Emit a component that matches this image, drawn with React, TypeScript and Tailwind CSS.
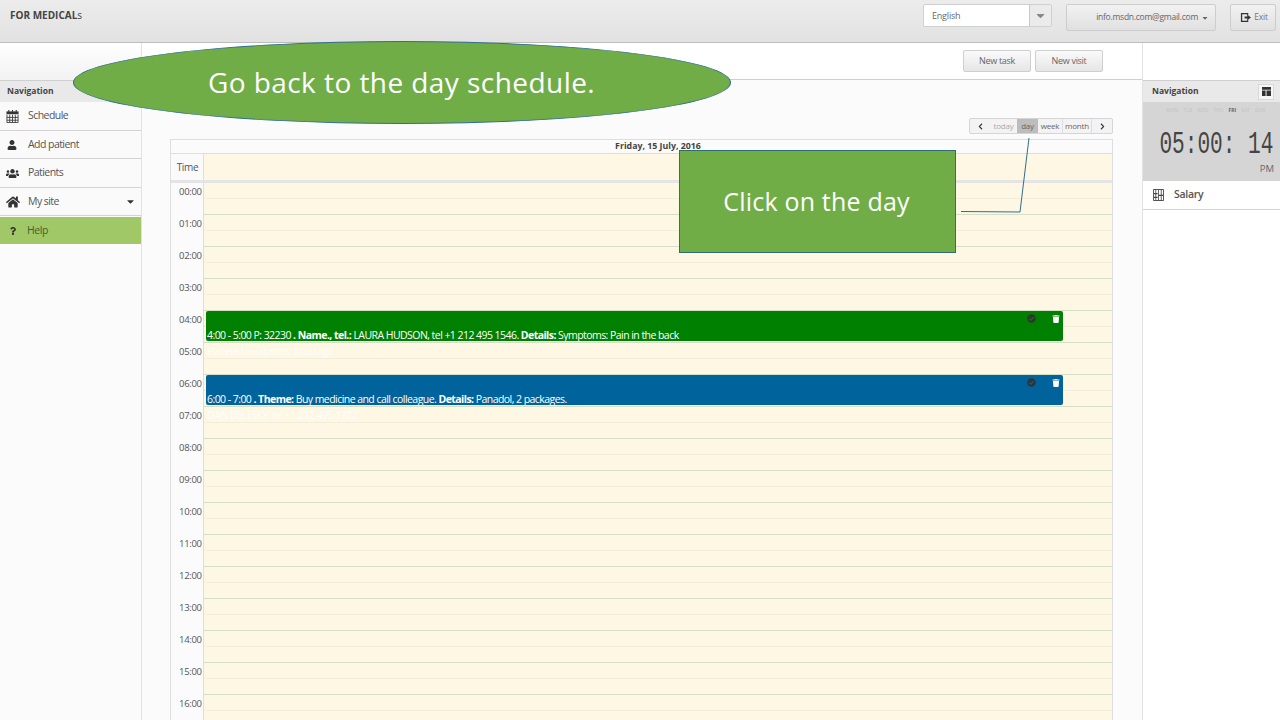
import { FaCaretDown, FaCheckCircle, FaChevronLeft, FaChevronRight, FaHome, FaQuestion, FaTrash, FaUser, FaUsers } from "react-icons/fa";

const hours = ["00:00", "01:00", "02:00", "03:00", "04:00", "05:00", "06:00", "07:00", "08:00", "09:00", "10:00", "11:00", "12:00", "13:00", "14:00", "15:00", "16:00"];

function CalendarIcon() {
  return (
    <svg viewBox="0 0 14 14" className="h-[13px] w-[13px]" fill="none">
      <path d="M0.5 1.5h13v3h-13z" fill="#333" />
      <path d="M3 0v2M7 0v2M11 0v2" stroke="#333" strokeWidth="1.2" />
      <path d="M1 5v8.5h12V5M1 8h12M1 11h12M4 5v8.5M7 5v8.5M10 5v8.5" stroke="#333" strokeWidth="0.9" />
    </svg>
  );
}

function SalaryIcon() {
  return (
    <svg viewBox="0 0 12 13" className="h-[12px] w-[11px]" fill="none">
      <path d="M0.5 0.5h11v12h-11z" stroke="#444" strokeWidth="1" />
      <path d="M3 1v11M6 1v11M9 1v11" stroke="#444" strokeWidth="0.9" />
      <path d="M1 5h4M6 7h5M1 9h4" stroke="#444" strokeWidth="1.4" />
    </svg>
  );
}

const navItems = [
  { label: "Schedule", icon: <CalendarIcon /> },
  { label: "Add patient", icon: <FaUser className="ml-[1px] text-[10px] text-[#333]" /> },
  { label: "Patients", icon: <FaUsers className="text-[13px] text-[#333]" /> },
  { label: "My site", icon: <FaHome className="text-[14px] text-[#333]" />, caret: true },
];

function NavRow({ label, icon, caret }: { label: string; icon: React.ReactNode; caret?: boolean }) {
  return (
    <div className="flex h-[28.5px] items-center border-b border-[#d4d4d4] bg-[#fafafa] pl-[6px] pr-[5px] pt-[1px] text-[10.5px] tracking-[-0.55px] text-[#555]">
      <span className="flex w-[22px] justify-start">{icon}</span>
      <span>{label}</span>
      {caret && <FaCaretDown className="ml-auto text-[11px] text-[#333]" />}
    </div>
  );
}

function CalendarEvent({ color, top, first, second }: { color: string; top: string; first: React.ReactNode; second: string }) {
  return (
    <div className={`absolute left-[35px] h-[30px] w-[857px] rounded-[2px] ${color} ${top}`}>
      <div className="absolute left-[1px] top-[17px] whitespace-nowrap text-[10.5px] leading-[14px] tracking-[-0.55px] text-white">
        {first}
        <div className="mt-[2px] opacity-90">{second}</div>
      </div>
      <FaCheckCircle className="absolute right-[27px] top-[3px] text-[9px] text-[#333]" />
      <FaTrash className="absolute right-[3px] top-[4px] text-[8px] text-white" />
    </div>
  );
}

function ToolButton({ label }: { label: string }) {
  return (
    <div className="flex h-[22px] w-[68px] items-center justify-center rounded-[2px] border border-[#cfcfcf] bg-gradient-to-b from-[#fafafa] to-[#e6e6e6] text-[9px] tracking-[-0.3px] text-[#666]">
      {label}
    </div>
  );
}

export default function App() {
  return (
    <div className="relative flex h-[720px] w-[1280px] flex-col overflow-hidden bg-[#fbfbfb] font-['Open_Sans',sans-serif]">
      <header className="flex h-[43px] shrink-0 items-start border-b border-[#bdbdbd] bg-gradient-to-b from-[#ececec] to-[#e2e2e2] pl-[10px]">
        <span className="mt-[8px] text-[10px] font-bold text-[#444]">
          FOR MEDICAL<span className="font-normal">s</span>
        </span>
        <div className="ml-auto mr-[4px] mt-[4px] flex items-start">
          <div className="flex h-[23px] w-[129px] items-center rounded-[2px] border border-[#d0d0d0] bg-white pl-[8px] text-[9px] tracking-[-0.2px] text-[#666]">
            English
            <span className="ml-auto flex h-full w-[22px] items-center justify-center border-l border-[#c8c8c8] bg-[#ebebeb] text-[13px] text-[#888]">
              <FaCaretDown />
            </span>
          </div>
          <div className="ml-[14px] flex h-[27px] w-[150px] items-center justify-end rounded-[2px] border border-[#cdcdcd] bg-gradient-to-b from-[#f2f2f2] to-[#e0e0e0] pr-[6px] text-[8.5px] tracking-[-0.25px] text-[#666]">
            info.msdn.com@gmail.com
            <FaCaretDown className="ml-[3px] text-[8px]" />
          </div>
          <div className="ml-[14px] flex h-[27px] w-[46px] items-center justify-center gap-[3px] rounded-[2px] border border-[#cdcdcd] bg-gradient-to-b from-[#f2f2f2] to-[#e0e0e0] pl-[2px] text-[8.5px] tracking-[-0.2px] text-[#777]">
            <svg viewBox="0 0 12 12" className="h-[11px] w-[11px] fill-[#333]">
              <path d="M1 1h8v3H7.8V2.4H2.4v7.2h5.4V8H9v3H1zM5 5h3V3l4 3-4 3V7H5z" />
            </svg>
            Exit
          </div>
        </div>
      </header>

      <div className="flex min-h-0 flex-1">
        <aside className="w-[142px] shrink-0 border-r border-[#e2e2e2]">
          <div className="h-[37px] bg-gradient-to-b from-white to-[#f2f2f2]" />
          <div className="flex h-[22px] items-center border-t border-[#cfcfcf] bg-[#e9e9e9] pl-[7px] text-[8.5px] font-bold text-[#444]">Navigation</div>
          {navItems.map((item) => (
            <NavRow key={item.label} {...item} />
          ))}
          <div className="mt-[1px] flex h-[27px] items-center bg-[#a0c866] pl-[10px] text-[10.5px] tracking-[-0.4px] text-[#4b5b33]">
            <FaQuestion className="mr-[11px] w-[6px] text-[8px] text-[#333]" />
            Help
          </div>
        </aside>

        <main className="flex min-w-0 flex-1 flex-col">
          <div className="flex h-[37px] shrink-0 items-center justify-end gap-[4px] border-b border-[#cfcfcf] bg-white pr-[39px]">
            <ToolButton label="New task" />
            <ToolButton label="New visit" />
          </div>

          <div className="flex flex-1 flex-col pl-[28px] pr-[29px]">
            <div className="mt-[38px] flex h-[16px] shrink-0 items-stretch justify-end text-[8px] tracking-[-0.2px] text-[#666]">
              <div className="flex overflow-hidden rounded-[2px] border border-[#d5d5d5] bg-[#f3f3f3]">
                <span className="flex w-[20px] items-center justify-center text-[7px] text-[#333]"><FaChevronLeft /></span>
                <span className="flex w-[27px] items-center justify-center text-[#aaa]">today</span>
                <span className="flex w-[21px] items-center justify-center bg-[#bdbdbd]">day</span>
                <span className="flex w-[25px] items-center justify-center border-r border-[#ddd]">week</span>
                <span className="flex w-[29px] items-center justify-center border-r border-[#ddd]">month</span>
                <span className="flex w-[20px] items-center justify-center text-[7px] text-[#333]"><FaChevronRight /></span>
              </div>
            </div>

            <div className="mt-[5px] min-h-0 flex-1 overflow-hidden border-x border-t border-[#dedede]">
              <div className="flex h-[14px] items-center justify-center border-b border-[#dedede] bg-[#fbfbfb] pl-[33px] text-[8.8px] font-bold leading-none text-[#444]">
                Friday, 15 July, 2016
              </div>
              <div className="flex h-[29px] border-b-[3px] border-[#e4e4e4]">
                <div className="flex w-[33px] shrink-0 items-center justify-center border-r border-[#dedede] bg-[#fafafa] pl-[1px] text-[10px] tracking-[-0.3px] text-[#555]">Time</div>
                <div className="flex-1 bg-[#fef7e4]" />
              </div>
              <div className="relative">
                {hours.map((hour) => (
                  <div key={hour} className="flex h-[32px]">
                    <div className="w-[33px] shrink-0 border-r border-[#dedede] pl-[8px] pt-[2px] text-[9.5px] leading-[14px] tracking-[-0.3px] text-[#555]">{hour}</div>
                    <div className="flex-1 border-b border-[#d3dfc6] bg-[#fef7e4]">
                      <div className="h-[16px] border-b border-[#efeeda]" />
                    </div>
                  </div>
                ))}
                <CalendarEvent
                  color="bg-[#008000]"
                  top="top-[128px]"
                  first={<>4:00 - 5:00 P: 32230 <b>. Name., tel.:</b> LAURA HUDSON, tel +1 212 495 1546. <b>Details:</b> Symptoms: Pain in the back</>}
                  second="Planned treatment: massage"
                />
                <CalendarEvent
                  color="bg-[#00639c]"
                  top="top-[192px]"
                  first={<>6:00 - 7:00 <b>. Theme:</b> Buy medicine and call colleague. <b>Details:</b> Panadol, 2 packages.</>}
                  second="DAN BELTSKY, tel +1 212 495 1782"
                />
              </div>
            </div>
          </div>
        </main>

        <aside className="w-[138px] shrink-0 border-l border-[#e2e2e2] bg-white">
          <div className="h-[37px]" />
          <div className="flex h-[22px] items-center border-t border-[#cfcfcf] bg-[#e9e9e9] pl-[9px] pr-[6px] text-[8.5px] font-bold text-[#444]">
            Navigation
            <span className="ml-auto flex h-[16px] w-[16px] items-center justify-center border border-[#d8d8d8] bg-[#f6f6f6]">
              <svg viewBox="0 0 10 10" className="h-[9px] w-[9px] fill-[#333]">
                <path d="M0 0h10v3H0zM0 4h4v6H0zM5 4h5v6H5z" />
              </svg>
            </span>
          </div>
          <div className="flex h-[79px] flex-col bg-[#d5d5d5]">
            <div className="mt-[5px] flex justify-center gap-[5px] pl-[8px] text-[5px] text-[#c4c4c4]">
              <span>MON</span><span>TUE</span><span>WED</span><span>THU</span><span className="font-bold text-[#666]">FRI</span><span>SAT</span><span>SUN</span>
            </div>
            <div className="mt-[13px] flex justify-center pl-[10px]">
              <span className="scale-x-[0.66] whitespace-pre font-['Liberation_Mono',monospace] text-[32px] leading-[34px] text-[#444]">05:00: 14</span>
            </div>
            <div className="pr-[6px] text-right text-[9.5px] text-[#666]">PM</div>
          </div>
          <div className="flex h-[29px] items-center border-b border-[#d4d4d4] bg-white pl-[10px] text-[10.5px] font-semibold tracking-[-0.3px] text-[#555]">
            <span className="mr-[10px]"><SalaryIcon /></span>
            Salary
          </div>
        </aside>
      </div>

      {/* slide callouts on top of the screenshot */}
      <div className="absolute left-[73px] top-[41px] flex h-[83px] w-[658px] items-center justify-center rounded-[50%] border border-[#2f6f8f] bg-[#70ad47] pb-[2px] pr-[1px] text-[28px] tracking-[0.44px] text-white">
        Go back to the day schedule.
      </div>
      <div className="absolute left-[679px] top-[150px] flex h-[103px] w-[277px] items-center justify-center border border-[#2f6f6f] bg-[#70ad47] pr-[2px] text-[25px] tracking-[0.2px] text-white">
        Click on the day
      </div>
      <svg className="absolute left-[960px] top-[136px] h-[80px] w-[72px]" viewBox="0 0 72 80" fill="none">
        <path d="M1 75.5 L60 76 L69 2" stroke="#2f6f8f" strokeWidth="1" />
      </svg>
    </div>
  );
}
